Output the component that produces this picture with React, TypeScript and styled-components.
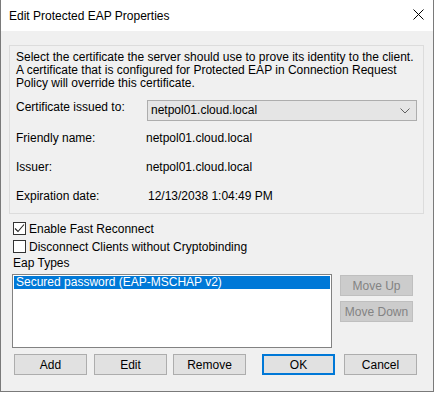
import React, { FC } from "react";
import styled, { createGlobalStyle } from "styled-components";

const GlobalStyle = createGlobalStyle`
    html, body {
        margin: 0;
        padding: 0;
        background: #ffffff;
    }
    * {
        box-sizing: border-box;
    }
`

const App: FC = () => {
    return (
        <>
            <GlobalStyle />
            <Window>
                <TitleBar>
                    <Title>Edit Protected EAP Properties</Title>
                    <CloseBox>
                        <svg width="11" height="11" viewBox="0 0 11 11">
                            <path d="M0.5 0.5 L10.5 10.5 M10.5 0.5 L0.5 10.5" stroke="#000" strokeWidth="1" fill="none" />
                        </svg>
                    </CloseBox>
                </TitleBar>
                <Body>
                    <GroupBox>
                        <Intro>
                            Select the certificate the server should use to prove its identity to the client.<br />
                            A certificate that is configured for Protected EAP in Connection Request<br />
                            Policy will override this certificate.
                        </Intro>
                        <InfoGrid>
                            <Label>Certificate issued to:</Label>
                            <Combo>
                                <span>netpol01.cloud.local</span>
                                <svg width="10" height="6" viewBox="0 0 10 6">
                                    <path d="M0.5 0.5 L5 5 L9.5 0.5" stroke="#606060" strokeWidth="1" fill="none" />
                                </svg>
                            </Combo>
                            <Label>Friendly name:</Label>
                            <Value>netpol01.cloud.local</Value>
                            <Label>Issuer:</Label>
                            <Value>netpol01.cloud.local</Value>
                            <Label>Expiration date:</Label>
                            <Value $shift={2}>12/13/2038 1:04:49 PM</Value>
                        </InfoGrid>
                    </GroupBox>
                    <CheckRow $top={8}>
                        <CheckBox>
                            <svg width="11" height="11" viewBox="0 0 11 11">
                                <path d="M1 5.5 L4 8.5 L10 1.5" stroke="#222" strokeWidth="1.1" fill="none" />
                            </svg>
                        </CheckBox>
                        Enable Fast Reconnect
                    </CheckRow>
                    <CheckRow $top={5}>
                        <CheckBox />
                        Disconnect Clients without Cryptobinding
                    </CheckRow>
                    <SectionLabel>Eap Types</SectionLabel>
                    <ListArea>
                        <ListBox>
                            <ListItem $selected>Secured password (EAP-MSCHAP v2)</ListItem>
                        </ListBox>
                        <SideButtons>
                            <Button disabled>Move Up</Button>
                            <Button disabled>Move Down</Button>
                        </SideButtons>
                    </ListArea>
                    <ButtonRow>
                        <Button>Add</Button>
                        <Button $gap={7}>Edit</Button>
                        <Button $gap={6}>Remove</Button>
                        <Button $gap={16} $default>OK</Button>
                        <Button $gap={9}>Cancel</Button>
                    </ButtonRow>
                </Body>
            </Window>
        </>
    )
}

const Window = styled.div`
    width: 434px;
    height: 392px;
    display: flex;
    flex-direction: column;
    background-color: #f0f0f0;
    border: 1px solid #7a7a7a;
    border-top: none;
    font-family: "Liberation Sans", Arial, sans-serif;
    font-size: 12px;
    color: #000;
`
const TitleBar = styled.div`
    height: 31px;
    background-color: #ffffff;
    display: flex;
    align-items: center;
    justify-content: space-between;
    padding-left: 8px;
    flex-shrink: 0;
`
const Title = styled.div`
    font-size: 12px;
    padding-top: 1px;
`
const CloseBox = styled.div`
    width: 46px;
    height: 31px;
    display: flex;
    align-items: center;
    justify-content: center;
    margin-right: -8px;
    padding-bottom: 3px;
`
const Body = styled.div`
    display: flex;
    flex-direction: column;
    padding: 14px 8px 0 8px;
`
const GroupBox = styled.div`
    width: 415px;
    height: 169px;
    border: 1px solid #dcdcdc;
    padding: 5px 0 0 6px;
`
const Intro = styled.div`
    line-height: 13px;
`
const InfoGrid = styled.div`
    display: grid;
    grid-template-columns: 131px 270px;
    grid-template-rows: 31px 29px 29px 29px;
    margin-top: 10px;
`
const Label = styled.div`
    line-height: 13px;
    padding-top: 1px;
`
const Value = styled.div<{ $shift?: number }>`
    line-height: 13px;
    padding-top: 1px;
    margin-left: ${p => (p.$shift ?? 0) - 1}px;
`
const Combo = styled.div`
    height: 21px;
    background-color: #e5e5e5;
    border: 1px solid #adadad;
    display: flex;
    align-items: center;
    justify-content: space-between;
    padding: 0 6px 0 3px;
    span {
        padding-bottom: 1px;
    }
`
const CheckRow = styled.div<{ $top: number }>`
    display: flex;
    align-items: center;
    height: 13px;
    margin-top: ${p => p.$top}px;
    margin-left: 4px;
`
const CheckBox = styled.div`
    width: 13px;
    height: 13px;
    border: 1px solid #333;
    background-color: #fff;
    margin-right: 3px;
    display: flex;
    align-items: center;
    justify-content: center;
`
const SectionLabel = styled.div`
    margin-top: 4px;
    margin-left: 4px;
    line-height: 13px;
`
const ListArea = styled.div`
    display: flex;
    margin-top: 4px;
    margin-left: 3px;
`
const ListBox = styled.div`
    width: 320px;
    height: 74px;
    border: 1px solid #828282;
    background-color: #fff;
    padding: 1px;
`
const ListItem = styled.div<{ $selected?: boolean }>`
    height: 13px;
    line-height: 13px;
    padding-left: 2px;
    background-color: ${p => (p.$selected ? "#0078d7" : "transparent")};
    color: ${p => (p.$selected ? "#fff" : "#000")};
`
const SideButtons = styled.div`
    display: flex;
    flex-direction: column;
    gap: 5px;
    margin-left: 8px;
    padding-top: 1px;
`
const Button = styled.button<{ $gap?: number; $default?: boolean }>`
    width: 73px;
    height: 21px;
    margin: 0 0 0 ${p => p.$gap ?? 0}px;
    padding: 0;
    font-family: "Liberation Sans", Arial, sans-serif;
    font-size: 12px;
    color: #000;
    background-color: #e1e1e1;
    border: ${p => (p.$default ? "2px solid #0078d7" : "1px solid #adadad")};
    &:disabled {
        background-color: #cccccc;
        border-color: #bfbfbf;
        color: #838383;
    }
`
const ButtonRow = styled.div`
    display: flex;
    margin-top: 6px;
    margin-left: 5px;
`

export default App
